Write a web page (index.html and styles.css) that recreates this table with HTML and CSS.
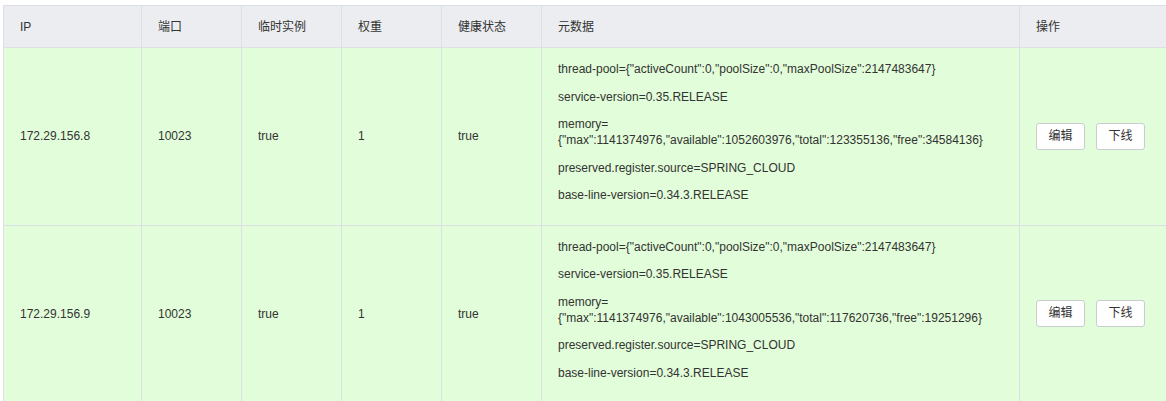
FILE: index.html
```html
<!DOCTYPE html>
<html lang="zh">
<head>
<meta charset="utf-8">
<title>实例列表</title>
<link rel="stylesheet" href="styles.css">
</head>
<body>
<div class="wrap">
<table class="inst-table">
  <colgroup>
    <col class="c-ip"><col class="c-port"><col class="c-eph"><col class="c-weight"><col class="c-health"><col class="c-meta"><col class="c-op">
  </colgroup>
  <thead>
    <tr><th>IP</th><th>端口</th><th>临时实例</th><th>权重</th><th>健康状态</th><th>元数据</th><th>操作</th></tr>
  </thead>
  <tbody>
    <tr>
      <td>172.29.156.8</td><td>10023</td><td>true</td><td>1</td><td>true</td>
      <td class="meta">
        <div class="kv">thread-pool={"activeCount":0,"poolSize":0,"maxPoolSize":2147483647}</div>
        <div class="kv">service-version=0.35.RELEASE</div>
        <div class="kv">memory=<br>{"max":1141374976,"available":1052603976,"total":123355136,"free":34584136}</div>
        <div class="kv">preserved.register.source=SPRING_CLOUD</div>
        <div class="kv">base-line-version=0.34.3.RELEASE</div>
      </td>
      <td class="ops"><button class="btn">编辑</button><button class="btn">下线</button></td>
    </tr>
    <tr>
      <td>172.29.156.9</td><td>10023</td><td>true</td><td>1</td><td>true</td>
      <td class="meta">
        <div class="kv">thread-pool={"activeCount":0,"poolSize":0,"maxPoolSize":2147483647}</div>
        <div class="kv">service-version=0.35.RELEASE</div>
        <div class="kv">memory=<br>{"max":1141374976,"available":1043005536,"total":117620736,"free":19251296}</div>
        <div class="kv">preserved.register.source=SPRING_CLOUD</div>
        <div class="kv">base-line-version=0.34.3.RELEASE</div>
      </td>
      <td class="ops"><button class="btn">编辑</button><button class="btn">下线</button></td>
    </tr>
  </tbody>
</table>
</div>
</body>
</html>
```
FILE: styles.css
```css
html, body {
  margin: 0;
  padding: 0;
  background: #fff;
  overflow: hidden;
}
body {
  font-family: "Liberation Sans", "Noto Sans CJK SC", sans-serif;
  font-size: 12px;
  color: #333;
}
.wrap {
  padding: 5px 0 0 3px;
}
.inst-table {
  border-collapse: collapse;
  table-layout: fixed;
  width: 1200px;
}
.c-ip { width: 138px; }
.c-port, .c-eph, .c-weight, .c-health { width: 100px; }
.c-meta { width: 478px; }
.c-op { width: 184px; }
.inst-table th,
.inst-table td {
  border: 1px solid #dcdfe6;
  padding: 12px 16px;
  line-height: 16px;
  text-align: left;
  vertical-align: middle;
}
.inst-table th {
  background: #ebedf0;
  font-weight: normal;
  padding: 13px 16px 12px;
}
.inst-table td {
  background: #e2fdd9;
}
.inst-table td.meta {
  padding: 13px 16px 10px;
}
.kv {
  margin-bottom: 11.5px;
  white-space: nowrap;
}
.ops {
  white-space: nowrap;
}
.btn {
  font-family: inherit;
  font-size: 12px;
  color: #333;
  background: #fff;
  border: 1px solid #c9ccd1;
  border-radius: 3px;
  height: 27px;
  width: 49px;
  padding: 0;
  margin-right: 11px;
  line-height: 25px;
  vertical-align: middle;
}
```
